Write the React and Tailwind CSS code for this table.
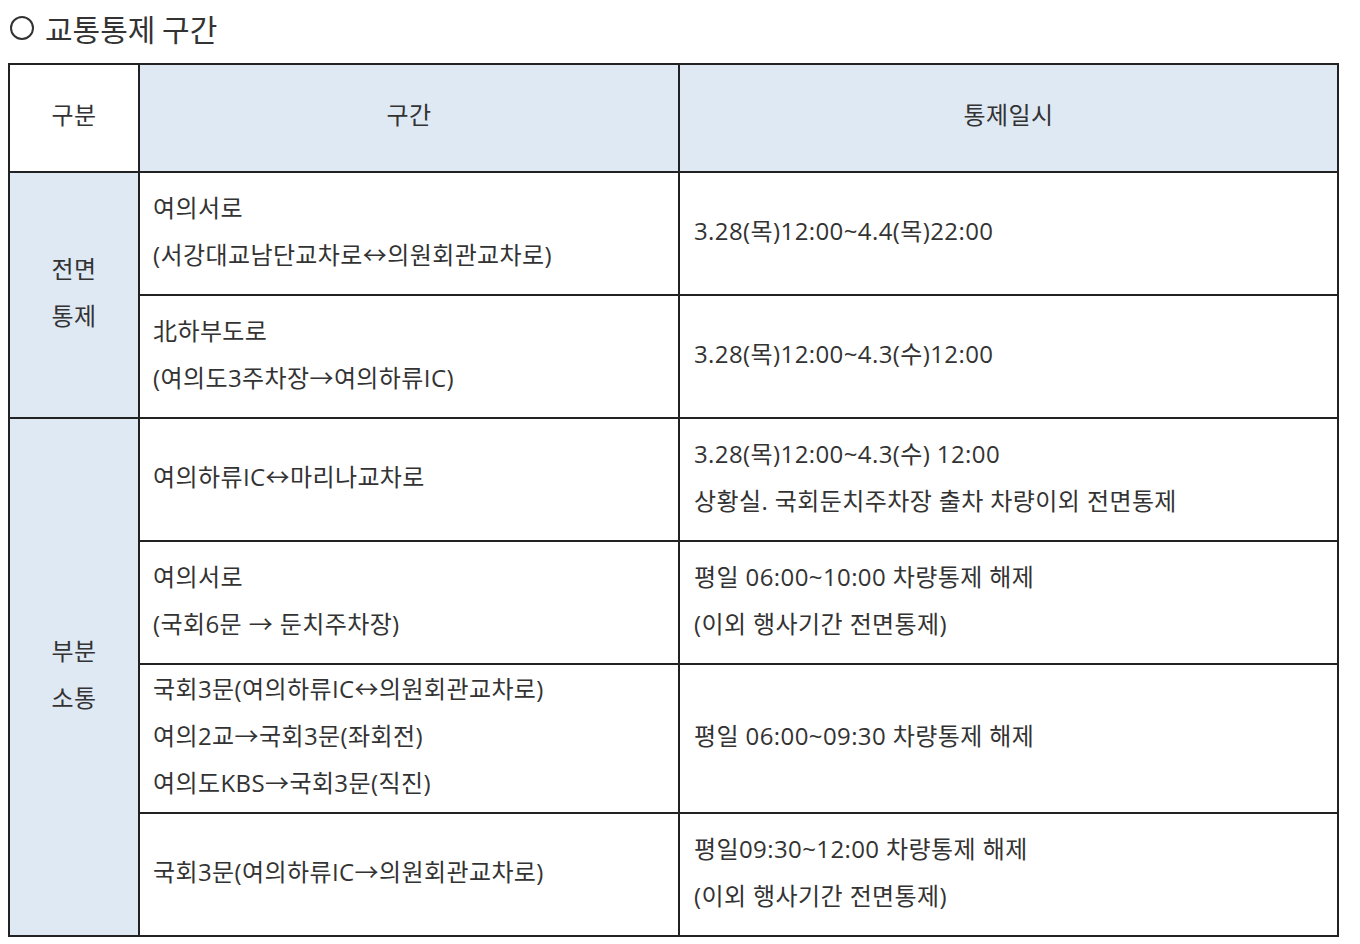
import React from 'react'

const rows = [
    { lines: ['여의서로', '(서강대교남단교차로↔의원회관교차로)'], time: ['3.28(목)12:00~4.4(목)22:00'], h: 'h-[123px]' },
    { lines: ['北하부도로', '(여의도3주차장→여의하류IC)'], time: ['3.28(목)12:00~4.3(수)12:00'], h: 'h-[123px]' },
    { lines: ['여의하류IC↔마리나교차로'], time: ['3.28(목)12:00~4.3(수) 12:00', '상황실. 국회둔치주차장 출차 차량이외 전면통제'], h: 'h-[123px]' },
    { lines: ['여의서로', '(국회6문 → 둔치주차장)'], time: ['평일 06:00~10:00 차량통제 해제', '(이외 행사기간 전면통제)'], h: 'h-[123px]' },
    { lines: ['국회3문(여의하류IC↔의원회관교차로)', '여의2교→국회3문(좌회전)', '여의도KBS→국회3문(직진)'], time: ['평일 06:00~09:30 차량통제 해제'], h: 'h-[149px]' },
    { lines: ['국회3문(여의하류IC→의원회관교차로)'], time: ['평일09:30~12:00 차량통제 해제', '(이외 행사기간 전면통제)'], h: 'h-[123px]' },
]

function Lines({ items }) {
    return (
        <div className="leading-[47px] pb-[6px]">
            {items.map((t, i) => <div key={i}>{t}</div>)}
        </div>
    )
}

export default function App() {
    return (
        <div className="bg-white min-h-screen text-[#333] font-['Open_Sans','Noto_Sans_CJK_KR',sans-serif]">
            <h2 className="flex items-center gap-[11px] pl-[10px] h-[56px] text-[30px] font-normal">
                <span className="w-[24px] h-[24px] rounded-full border-2 border-[#333] inline-block"></span>
                <span className="font-['Noto_Sans_CJK_KR',sans-serif]">교통통제 구간</span>
            </h2>
            <table className="ml-[8px] mt-[7px] w-[1329px] table-fixed border-collapse text-[24px] tracking-[0.4px]">
                <colgroup>
                    <col className="w-[130px]" />
                    <col className="w-[540px]" />
                    <col className="w-[659px]" />
                </colgroup>
                <thead>
                    <tr className="h-[108px]">
                        <th className="border-2 border-[#222] font-normal bg-white pb-[6px]">구분</th>
                        <th className="border-2 border-[#222] font-normal bg-[#dfe9f3] pb-[6px]">구간</th>
                        <th className="border-2 border-[#222] font-normal bg-[#dfe9f3] pb-[6px]">통제일시</th>
                    </tr>
                </thead>
                <tbody>
                    {rows.map((r, i) => (
                        <tr key={i} className={r.h}>
                            {i === 0 && (
                                <td rowSpan={2} className="border-2 border-[#222] bg-[#dfe9f3] text-center align-middle">
                                    <Lines items={['전면', '통제']} />
                                </td>
                            )}
                            {i === 2 && (
                                <td rowSpan={4} className="border-2 border-[#222] bg-[#dfe9f3] text-center align-middle">
                                    <Lines items={['부분', '소통']} />
                                </td>
                            )}
                            <td className="border-2 border-[#222] pl-[13px] align-middle">
                                <Lines items={r.lines} />
                            </td>
                            <td className="border-2 border-[#222] pl-[14px] align-middle">
                                <Lines items={r.time} />
                            </td>
                        </tr>
                    ))}
                </tbody>
            </table>
        </div>
    )
}
